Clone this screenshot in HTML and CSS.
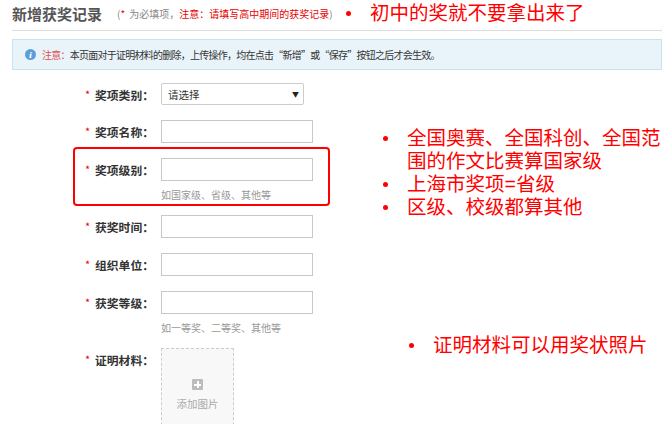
FILE: index.html
```html
<!DOCTYPE html>
<html lang="zh-CN">
<head>
<meta charset="utf-8">
<title>新增获奖记录</title>
<link rel="stylesheet" href="styles.css">
</head>
<body>
<div class="page">
  <div class="header">
    <h1 class="title">新增获奖记录</h1>
    <span class="sub">(<span class="req">*</span> 为必填项，<span class="warn">注意：请填写高中期间的获奖记录</span>)</span>
  </div>
  <div class="notice">
    <span class="info-icon">i</span>
    <span class="notice-key">注意：</span>本页面对于证明材料的删除，上传操作，均在点击“新增”或“保存”按钮之后才会生效。
  </div>
  <div class="form">
    <div class="row">
      <label class="label"><span class="star">*</span>奖项类别：</label>
      <div class="field">
        <div class="select"><span>请选择</span><span class="arrow">▼</span></div>
      </div>
    </div>
    <div class="row">
      <label class="label"><span class="star">*</span>奖项名称：</label>
      <div class="field"><div class="input"></div></div>
    </div>
    <div class="row">
      <label class="label"><span class="star">*</span>奖项级别：</label>
      <div class="field"><div class="input"></div><div class="hint">如国家级、省级、其他等</div></div>
    </div>
    <div class="row">
      <label class="label"><span class="star">*</span>获奖时间：</label>
      <div class="field"><div class="input"></div></div>
    </div>
    <div class="row">
      <label class="label"><span class="star">*</span>组织单位：</label>
      <div class="field"><div class="input"></div></div>
    </div>
    <div class="row">
      <label class="label"><span class="star">*</span>获奖等级：</label>
      <div class="field"><div class="input"></div><div class="hint">如一等奖、二等奖、其他等</div></div>
    </div>
    <div class="row">
      <label class="label"><span class="star">*</span>证明材料：</label>
      <div class="field">
        <div class="upload">
          <span class="plus"></span>
          <span class="upload-text">添加图片</span>
        </div>
      </div>
    </div>
  </div>

  <div class="highlight"></div>
  <div class="note note-top"><span class="dot"></span><span>初中的奖就不要拿出来了</span></div>
  <ul class="note note-mid">
    <li><span class="dot"></span><span>全国奥赛、全国科创、全国范<br>围的作文比赛算国家级</span></li>
    <li><span class="dot"></span><span>上海市奖项=省级</span></li>
    <li><span class="dot"></span><span>区级、校级都算其他</span></li>
  </ul>
  <div class="note note-bot"><span class="dot"></span><span>证明材料可以用奖状照片</span></div>
</div>
</body>
</html>
```
FILE: styles.css
```css
* { box-sizing: border-box; }
html, body { margin: 0; padding: 0; background: #fff; }
body {
  font-family: "Noto Sans CJK SC", "Noto Sans", "Liberation Sans", sans-serif;
  color: #333;
  overflow: hidden;
}
.page {
  position: relative;
  width: 671px;
  height: 424px;
  padding: 0 9px 0 12px;
}
.header {
  display: flex;
  align-items: center;
  height: 31px;
  border-bottom: 1px solid #dcdcdc;
  padding-bottom: 2px;
}
.title {
  margin: 0;
  font-size: 15px;
  font-weight: bold;
  color: #555;
  line-height: 20px;
}
.sub {
  margin-left: 15px;
  font-size: 10px;
  color: #888;
  line-height: 14px;
}
.sub .req { color: #e00; margin-right: 2px; }
.sub .warn { color: #e60000; }
.notice {
  margin-top: 8px;
  height: 31px;
  border: 1px solid #c8e4ef;
  background: #e9f4fa;
  display: flex;
  align-items: center;
  padding-left: 12px;
  font-size: 10px;
  letter-spacing: -0.75px;
  color: #333;
}
.info-icon {
  width: 11px;
  height: 11px;
  border-radius: 50%;
  background: #5a9fd8;
  color: #fff;
  font-size: 8px;
  font-weight: bold;
  font-style: italic;
  font-family: "DejaVu Serif", serif;
  letter-spacing: 0;
  display: flex;
  align-items: center;
  justify-content: center;
  margin-right: 6px;
  line-height: 1;
}
.notice-key { color: #d9534f; }
.form {
  margin-top: 13px;
  padding-left: 73px;
  display: flex;
  flex-direction: column;
  gap: 15px;
}
.row {
  display: flex;
  align-items: flex-start;
}
.label {
  width: 76px;
  height: 22px;
  display: flex;
  align-items: center;
  font-size: 11.8px;
  font-weight: bold;
  color: #333;
}
.star {
  color: #e00;
  font-weight: normal;
  font-size: 11px;
  width: 10px;
}
.field { display: flex; flex-direction: column; }
.select {
  width: 143px;
  height: 22px;
  border: 1px solid #ccc;
  border-radius: 2px;
  display: flex;
  align-items: center;
  justify-content: space-between;
  padding: 0 4px 0 6px;
  font-size: 10.5px;
  color: #333;
}
.arrow { font-size: 7px; color: #222; }
.input {
  width: 152px;
  height: 23px;
  border: 1px solid #c8c8c8;
}
.hint {
  margin-top: 7px;
  margin-bottom: -2px;
  line-height: 14px;
  font-size: 10px;
  color: #999;
}
.upload {
  width: 73px;
  height: 82px;
  border: 1px dashed #ccc;
  background: #f8f8f8;
  display: flex;
  flex-direction: column;
  align-items: center;
  padding-top: 30px;
}
.plus {
  position: relative;
  width: 11px;
  height: 11px;
  background: #bcbcbc;
  border-radius: 1px;
}
.plus::before, .plus::after {
  content: "";
  position: absolute;
  background: #fff;
}
.plus::before { left: 2px; right: 2px; top: 4.5px; height: 2px; }
.plus::after { top: 2px; bottom: 2px; left: 4.5px; width: 2px; }
.upload-text {
  margin-top: 7px;
  font-size: 10.5px;
  color: #aaa;
  line-height: 14px;
}

/* annotation overlays */
.highlight {
  position: absolute;
  left: 73px;
  top: 147px;
  width: 257px;
  height: 59px;
  border: 2px solid #f00;
  border-radius: 4px;
}
.note {
  position: absolute;
  margin: 0;
  padding: 0;
  list-style: none;
  color: #f00;
  font-family: "Liberation Sans", "Noto Sans CJK SC", sans-serif;
  font-size: 19.5px;
  line-height: 23px;
}
.note .dot {
  display: inline-block;
  width: 5px;
  height: 5px;
  border-radius: 50%;
  background: #f00;
  flex: none;
  margin-top: 9px;
}
.note-top { left: 346px; top: 2px; display: flex; gap: 19px; }
.note-mid { left: 383px; top: 127px; width: 285px; }
.note-mid li { display: flex; gap: 19px; }
.note-bot { left: 409px; top: 334px; display: flex; gap: 19px; }
```
